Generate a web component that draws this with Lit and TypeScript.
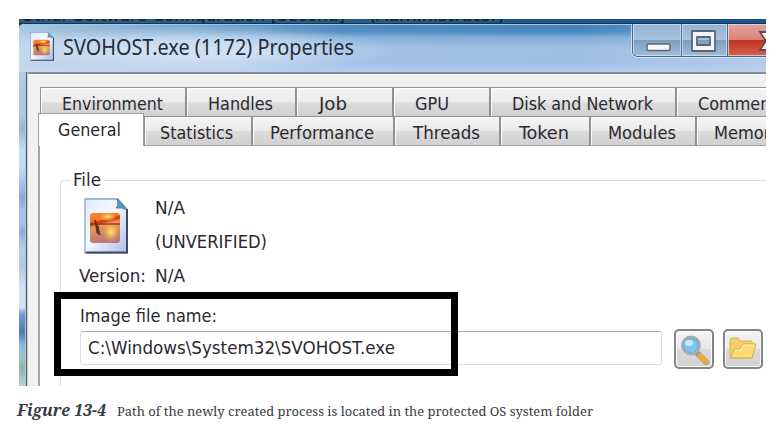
import { LitElement, html, css, svg } from "lit";
import { customElement, property } from "lit/decorators.js";

/** A line of text set to an exact measure. */
@customElement("fit-label")
class FitLabel extends LitElement {
  @property() text = "";
  @property({ type: Number }) measure = 100;
  static styles = css`
    :host { display: block; flex: none; }
    svg { display: block; overflow: visible; height: 20px; }
    text { white-space: pre; fill: currentColor; }
  `;
  render() {
    return html`<svg width=${this.measure}>
      ${svg`<text x="0" y="15" textLength=${this.measure} lengthAdjust="spacingAndGlyphs">${this.text}</text>`}
    </svg>`;
  }
}

interface Tab { name: string; width: number; inset: number; measure: number; active?: boolean; }

const backRow: Tab[] = [
  { name: "Environment", width: 146, inset: 21, measure: 101 },
  { name: "Handles", width: 110, inset: 21, measure: 65 },
  { name: "Job", width: 97, inset: 22, measure: 28 },
  { name: "GPU", width: 97, inset: 21, measure: 34 },
  { name: "Disk and Network", width: 186, inset: 21, measure: 141 },
  { name: "Comments", width: 130, inset: 21, measure: 87 },
];
const frontRow: Tab[] = [
  { name: "General", width: 106, inset: 19, measure: 63, active: true },
  { name: "Statistics", width: 108, inset: 15, measure: 73 },
  { name: "Performance", width: 142, inset: 17, measure: 104 },
  { name: "Threads", width: 106, inset: 18, measure: 67 },
  { name: "Token", width: 90, inset: 18, measure: 50 },
  { name: "Modules", width: 106, inset: 17, measure: 68 },
  { name: "Memory", width: 110, inset: 17, measure: 66 },
];

@customElement("app-root")
class AppRoot extends LitElement {
  static styles = css`
    * { box-sizing: border-box; }
    :host {
      display: block; width: 778px; height: 443px; overflow: hidden; background: #fff;
      padding: 19px 0 0 19px;
      font: 17.5px "DejaVu Sans Condensed", "DejaVu Sans", sans-serif; color: #2c2830;
    }
    .shot { position: relative; width: 747px; height: 367px; overflow: hidden; display: flex; flex-direction: column; background: #12354f; }
    .behind { height: 4px; flex: none; overflow: hidden; background: linear-gradient(90deg, #315a7b, #2a5b86 35%, #175489); color: #0b1c2c; display: flex; padding-left: 2px; gap: 24px; }
    .behind fit-label { margin-top: -13px; }
    .window { flex: none; height: 363px; border-top: 1px solid #18354f; border-top-left-radius: 5px; overflow: hidden;
      display: grid; grid-template-rows: 48px 1fr; grid-template-columns: 8px 1fr; background: #b5cdea; }
    .title { grid-column: 1 / 3; display: flex; padding-left: 11px; position: relative;
      border-top: 1px solid #9ccbe9;
      background: radial-gradient(ellipse 190px 25px at 185px 25px, rgba(225,236,248,.62) 30%, rgba(210,226,245,0) 100%),
        linear-gradient(90deg, rgba(205,224,240,.75), rgba(190,214,240,.1) 43%, rgba(255,255,255,0) 75%, rgba(205,220,242,.4)),
        linear-gradient(#427fb7, #4888be 14%, #85add9 28%, #a0c1e4 52%, #a2bee6 80%, #b2cbed); }
    .title .doc { margin-top: 7px; }
    .name { font: 21px "Noto Sans", "Open Sans", sans-serif; color: #222c3c; margin: 15px 0 0 9px; }
    .controls { position: absolute; left: 613px; top: -1px; width: 140px; height: 33px; display: flex; border: 1.5px solid #4e6788; border-top: 0; border-bottom-left-radius: 6px; box-shadow: 0 0 0 1px rgba(225,238,250,.75); overflow: hidden; }
    .ctl { height: 32px; border-right: 1.5px solid #506987; box-shadow: inset 0 0 0 1px rgba(215,230,245,.75);
      background: linear-gradient(#91b3d0, #a9c1dc 50%, #7c9dbf 51%, #9fbedb); }
    .ctl.min { width: 50px; } .ctl.max { width: 46px; }
    .ctl.close { width: 60px; background: linear-gradient(#e4a29a, #d98279 49%, #c23320 51%, #d6634d); }
    .ctl svg { display: block; }
    .glass { border-right: 1px solid #4c6071; box-shadow: inset -1px 0 #afc6d5;
      background: linear-gradient(#b1cbe5, #adc9e7 13%, #9ab5d0 18%, #c9def3 25%, #bed7f1 32%, #88a9d4 40%, #a4c3ec 44%, #a6c2e8 48%, #8facd0 51%, #b4cfed 56%, #b1c9e5 62%, #d5deec 68%, #d7e0ee 75%, #6e9bd6 77%, #527baa 83%, #8eb8da 87%, #9bc9c0 91%, #90b5a9 94%, #b4d7ca); }
    .client { border-top: 2px solid #818d9b; background: #f1f1ef; padding: 13px 0 0 10px; border-left: 1px solid #c8ced3; overflow: hidden; border-top-left-radius: 2px; }
    .row { display: flex; width: 900px; position: relative; }
    .row.back { padding-left: 2px; height: 26px; }
    .row.front { height: 33px; align-items: flex-end; z-index: 1; }
    .tab { flex: none; border: 1.5px solid #8e8f98; border-left-width: 1px; border-bottom: 0; background: linear-gradient(#f4f4f4, #ebebeb 48%, #dcdcdc 52%, #d0d0d0); box-shadow: inset 1px 1px #fcfcfc; display: flex; }
    .back .tab { height: 30px; } .back fit-label { margin-top: 7px; }
    .front .tab { height: 30px; border-bottom: 1.5px solid #9d9da6; } .front fit-label { margin-top: 7px; }
    .front .tab.active { height: 33px; border: 1.5px solid #9a9aa2; border-bottom: 0; background: #fff; box-shadow: none; }
    .front .tab.active fit-label { margin-top: 7px; }
    .page { height: 250px; margin-top: 0; background: #fff; border-left: 2px solid #a3a3aa; padding: 34px 0 0 20px; }
    fieldset { margin: 0; padding: 0; border: 1px solid #d7e0e6; border-radius: 4px; height: 260px; width: 800px; min-width: 0;
      display: block; margin-top: -10px; }
    legend { margin-left: 9px; padding: 1px 3px 0; height: 20px; }
    .info { display: grid; grid-template-columns: 76px 1fr; margin: 9px 0 0 18px; }
    .info .doc { margin: -1px 0 0 5px; grid-row: 1 / 3; }
    .line { height: 34px; }
    .field-name { margin: 20px 0 0 19px; }
    .path { display: flex; margin: 2px 0 0 19px; align-items: flex-start; }
    .box { width: 582px; height: 34px; margin-top: 2px; border: 1px solid #dddde5; border-top: 1.5px solid #aaa9b0; border-radius: 3px; padding: 7px 0 0 7px; background: #fff; }
    .btn { width: 40px; height: 40px; border: 2px solid #858588; border-radius: 5px; box-shadow: inset 0 0 0 1px #fafafa; background: linear-gradient(#f3f3f3, #e9e9e9 49%, #dadada 51%, #d2d2d2); margin-left: 12px; padding: 1px; }
    .btn + .btn { margin-left: 9px; }
    .btn svg { display: block; }
    .mark { position: absolute; left: 35px; top: 273px; width: 404px; height: 84px; border: 7px solid #000; z-index: 3; }
    .caption { display: flex; gap: 11px; margin: 15px 0 0 -2px; color: #363b43; font: 13.3px "Noto Serif", "Droid Serif", "DejaVu Serif Condensed", "DejaVu Serif", serif; }
    .caption .fig { font: italic bold 15.5px "Noto Serif", "Droid Serif", "DejaVu Serif Condensed", "DejaVu Serif", serif; }
  `;

  private doc(w: number, h: number, id: string) {
    return html`<svg class="doc" width=${w} height=${h} viewBox="0 0 44 56" preserveAspectRatio="none">
      <defs>
        <linearGradient id="${id}p" x2="1" y2="1"><stop stop-color="#dfebfb"/><stop offset=".45" stop-color="#f5f9ff"/><stop offset="1" stop-color="#a9bce8"/></linearGradient>
        <linearGradient id="${id}s" x2=".25" y2="1"><stop stop-color="#f18b38"/><stop offset=".28" stop-color="#f47821"/><stop offset=".36" stop-color="#c52f12"/><stop offset=".48" stop-color="#e49a55"/><stop offset="1" stop-color="#b77876"/></linearGradient>
        <radialGradient id="${id}g"><stop stop-color="#ffe96b"/><stop offset="1" stop-color="#ffb348" stop-opacity="0"/></radialGradient>
      </defs>
      <path d="M1 1H34L43 11V55H1Z" fill="url(#${id}p)" stroke="#86a4c9" stroke-width="1.3"/>
      <path d="M43 11V54.5H2" fill="none" stroke="#3e4964" stroke-width="2"/>
      <path d="M33 1Q35 8 32 10Q38 9 43 12Z" fill="#4f9bc9" stroke="#4a6983" stroke-width=".8"/>
      <rect x="6" y="15" width="30" height="30" rx="3" fill="url(#${id}s)"/>
      <ellipse cx="24" cy="19" rx="9" ry="5" fill="url(#${id}g)"/>
      <ellipse cx="27" cy="34" rx="9" ry="11" fill="url(#${id}g)"/>
      <path d="M6 25H36V27H6Z" fill="#bd2b13" opacity=".7"/>
      <path d="M11 22L14 28L16 37L13 35Z" fill="#5d3321" stroke="#5d3321"/>
    </svg>`;
  }

  private tabs(list: Tab[]) {
    return list.map(t => html`<div class="tab ${t.active ? "active" : ""}" style="width:${t.width}px;padding-left:${t.inset}px">
      <fit-label .text=${t.name} .measure=${t.measure}></fit-label></div>`);
  }

  private label(text: string, measure: number, cls = "") {
    return html`<fit-label class=${cls} .text=${text} .measure=${measure}></fit-label>`;
  }

  render() {
    return html`
      <div class="shot">
        <div class="behind">${this.label("Other Software Configuration [Second]", 324)}${this.label("(Administrator)", 136)}</div>
        <div class="window">
          <div class="title">
            ${this.doc(24, 29, "a")}
            ${this.label("SVOHOST.exe (1172) Properties", 291, "name")}
            <div class="controls">
              <div class="ctl min"><svg width="48" height="32"><rect x="14" y="20" width="23" height="6.5" rx="1.5" fill="#f7f7f7" stroke="#5d6577" stroke-width="1.5"/></svg></div>
              <div class="ctl max"><svg width="45" height="32"><path fill-rule="evenodd" d="M10 7H33V27H10ZM15 13V21H28V13Z" fill="#f4f4f6" stroke="#5d6577" stroke-width="1.8" stroke-linejoin="round"/></svg></div>
              <div class="ctl close"><svg width="60" height="32"><path d="M32 8H38L43 13L48 8H55L47 17L55 26H48L43 21L38 26H32L38 17Z" fill="#f4eeee" stroke="#5c4d5b" stroke-width="1.8"/></svg></div>
            </div>
          </div>
          <div class="glass"></div>
          <div class="client">
            <div class="row back">${this.tabs(backRow)}</div>
            <div class="row front">${this.tabs(frontRow)}</div>
            <div class="page">
              <fieldset>
                <legend>${this.label("File", 28)}</legend>
                <div class="info">
                  ${this.doc(44, 56, "b")}
                  <div class="line">${this.label("N/A", 30)}</div>
                  <div class="line">${this.label("(UNVERIFIED)", 112)}</div>
                  ${this.label("Version:", 67)}${this.label("N/A", 30)}
                </div>
                ${this.label("Image file name:", 137, "field-name")}
                <div class="path">
                  <div class="box">${this.label("C:\\Windows\\System32\\SVOHOST.exe", 307)}</div>
                  <div class="btn"><svg width="34" height="34"><path d="M20 21L29 30" stroke="#9f9b94" stroke-width="6" stroke-linecap="round"/><path d="M23 24L28.5 29.5" stroke="#f5a634" stroke-width="5" stroke-linecap="round"/><circle cx="14" cy="13.5" r="8.5" fill="#7fc7ef" stroke="#a9adb3" stroke-width="3"/><circle cx="14" cy="13.5" r="7" fill="none" stroke="#5eafe0" stroke-width="1"/><ellipse cx="12" cy="11" rx="4" ry="3" fill="#c6eafb"/></svg></div>
                  <div class="btn"><svg width="34" height="34"><path d="M4 26V8Q4 6 6 6H12L14 9H26V26Z" fill="#f2cf67" stroke="#d8b465"/><path d="M5 26L8 17H14L17 12H30L26 26Z" fill="#fbdc76" stroke="#d7ac4e" stroke-linejoin="round"/><path d="M9 18H14.5L17.5 13H28" stroke="#fff0ac" fill="none"/></svg></div>
                </div>
              </fieldset>
            </div>
          </div>
        </div>
        <div class="mark"></div>
      </div>
      <div class="caption">${this.label("Figure 13-4", 89, "fig")}${this.label("Path of the newly created process is located in the protected OS system folder", 476)}</div>
    `;
  }
}
